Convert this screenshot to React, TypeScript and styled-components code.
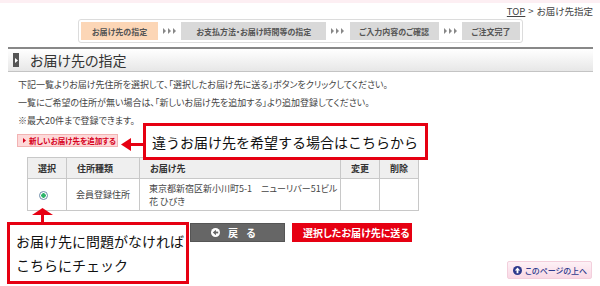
import React from "react";
import styled, { createGlobalStyle } from "styled-components";

const GlobalStyle = createGlobalStyle`
  html, body { margin: 0; padding: 0; background: #fff; }
  body { font-family: "Noto Sans CJK JP", "Noto Sans", sans-serif; color: #333; }
  svg { flex: none; }
`;

const jp = `"Noto Sans CJK JP", "Noto Sans", sans-serif`;

const Page = styled.div`
  position: relative;
  width: 600px;
  height: 286px;
  overflow: hidden;
  box-sizing: border-box;
  border-top: 3px solid #fdeff3;
  padding: 0 7px 0 8px;
  background: #fff;
  font-family: ${jp};
`;

const TopRow = styled.div`
  height: 16px;
  line-height: 18px;
  display: flex;
  justify-content: flex-end;
  align-items: center;
  gap: 3px;
  font-size: 9.5px;
  color: #444;
  font-feature-settings: "palt";
`;

const TopLink = styled.a`
  color: #444;
  text-decoration: underline;
`;

const StepBar = styled.div`
  margin: 0 0 0 70px;
  width: 445px;
  box-sizing: border-box;
  display: flex;
  align-items: center;
  padding: 2px;
  border: 1px solid #dcdcdc;
  border-radius: 3px;
  background: #fff;
`;

const Step = styled.div<{ $w: number; $active?: boolean }>`
  width: ${(p) => p.$w}px;
  height: 18px;
  flex: none;
  display: flex;
  align-items: center;
  justify-content: center;
  background: ${(p) => (p.$active ? "#fcd6b6" : "#d9d9d9")};
  color: #555;
  font-size: 8px;
  font-weight: 700;
  font-feature-settings: "palt";
`;

const StepArrow = styled.div`
  flex: 1;
  display: flex;
  justify-content: center;
  align-items: center;
`;

const SectionHeader = styled.div`
  margin-top: 4px;
  height: 22px;
  display: flex;
  align-items: center;
  border-top: 2px solid #888;
  border-bottom: 1px solid #c4c4c4;
  background: linear-gradient(#ffffff, #e7e7e7);
`;

const HeaderIcon = styled.span`
  margin-left: 5px;
  width: 6px;
  height: 14px;
  background: #555;
  display: flex;
  align-items: center;
  justify-content: center;
  flex: none;
`;

const Title = styled.h1`
  margin: 0 0 0 11px;
  font-size: 14px;
  font-weight: 400;
  color: #333;
  font-feature-settings: "palt";
`;

const Intro = styled.div`
  margin-top: 4px;
  padding-left: 10px;
  font-size: 9px;
  line-height: 18px;
  color: #444;
  font-feature-settings: "palt";
`;

const Line = styled.p`
  margin: 0;
  white-space: nowrap;
`;

const AddButton = styled.button`
  margin: 4px 0 0 9px;
  height: 13px;
  width: 101px;
  padding: 0 0 0 5px;
  display: flex;
  align-items: center;
  gap: 3px;
  border: 1px solid #f2b3b3;
  background: #fdd9d9;
  color: #d6001c;
  font-family: ${jp};
  font-size: 7.5px;
  font-weight: 700;
  font-feature-settings: "palt";
  cursor: pointer;
  white-space: nowrap;
`;

const Table = styled.table`
  margin: 10px 0 0 19px;
  border-collapse: collapse;
  width: 391px;
  table-layout: fixed;
  font-size: 9px;
  color: #444;
  font-feature-settings: "palt";
`;

const Th = styled.th<{ $w: number; $left?: boolean }>`
  width: ${(p) => p.$w}px;
  height: 21px;
  padding: 0 0 0 ${(p) => (p.$left ? 10 : 0)}px;
  text-align: ${(p) => (p.$left ? "left" : "center")};
  background: #efefef;
  border: 1px solid #c8c8c8;
  font-weight: 600;
  color: #333;
  box-sizing: border-box;
`;

const Td = styled.td<{ $align?: string; $pr?: number }>`
  height: 32px;
  padding: 0 ${(p) => p.$pr ?? 0}px 0 ${(p) => (p.$align === "left" ? 9 : 0)}px;
  text-align: ${(p) => p.$align ?? "center"};
  border: 1px solid #c8c8c8;
  line-height: 13px;
  white-space: nowrap;
  box-sizing: border-box;
`;

const Radio = styled.span`
  display: inline-block;
  width: 9px;
  height: 9px;
  border-radius: 50%;
  border: 1px solid #6b8aa8;
  background: radial-gradient(circle, #2fb46a 0 2px, #fff 2.5px);
  vertical-align: middle;
  box-sizing: border-box;
`;

const ButtonRow = styled.div`
  margin: 12px 0 0 182px;
  display: flex;
  gap: 7px;
`;

const BackButton = styled.button`
  width: 95px;
  height: 19px;
  display: flex;
  align-items: center;
  justify-content: center;
  gap: 8px;
  padding: 0;
  border: 1px solid #555;
  background: #666;
  color: #fff;
  font-family: ${jp};
  font-size: 10px;
  font-weight: 700;
  letter-spacing: 8px;
  cursor: pointer;
`;

const SendButton = styled.button`
  width: 120px;
  height: 19px;
  display: flex;
  align-items: center;
  padding: 0 0 0 11px;
  border: none;
  background: #e60012;
  color: #fff;
  font-family: ${jp};
  font-size: 10px;
  font-weight: 700;
  font-feature-settings: "palt";
  cursor: pointer;
  white-space: nowrap;
`;

const PageTopRow = styled.div`
  margin-top: 19px;
  display: flex;
  justify-content: flex-end;
  padding-right: 1px;
`;

const PageTopButton = styled.a`
  width: 85px;
  height: 18px;
  box-sizing: border-box;
  display: flex;
  align-items: center;
  gap: 3px;
  padding-left: 5px;
  border: 1px solid #f3cfdc;
  border-radius: 2px;
  background: linear-gradient(#fdf1f6, #f9d8e5);
  color: #2d3a8c;
  font-size: 8px;
  font-weight: 500;
  font-feature-settings: "palt";
  white-space: nowrap;
`;

const Callout = styled.div<{ $x: number; $y: number; $w: number; $h: number }>`
  position: absolute;
  left: ${(p) => p.$x}px;
  top: ${(p) => p.$y}px;
  width: ${(p) => p.$w}px;
  height: ${(p) => p.$h}px;
  box-sizing: border-box;
  border: 3px solid #e60012;
  background: #fff;
  display: flex;
  flex-direction: column;
  justify-content: center;
  padding-left: 6px;
  font-size: 14px;
  line-height: 24px;
  color: #111;
  white-space: nowrap;
`;

const Pointer = styled.svg<{ $x: number; $y: number }>`
  position: absolute;
  left: ${(p) => p.$x}px;
  top: ${(p) => p.$y}px;
`;

const Triangles = () => (
  <svg width="13" height="6" viewBox="0 0 13 6">
    {[0, 5, 10].map((x) => (
      <polygon key={x} points={`${x},0 ${x + 3},3 ${x},6`} fill="#888" />
    ))}
  </svg>
);

export default function App() {
  return (
    <>
      <GlobalStyle />
      <Page>
        <TopRow>
          <TopLink>TOP</TopLink>
          <span>&gt;</span>
          <span>お届け先指定</span>
        </TopRow>
        <StepBar>
          <Step $w={77} $active>お届け先の指定</Step>
          <StepArrow><Triangles /></StepArrow>
          <Step $w={145}>お支払方法・お届け時間等の指定</Step>
          <StepArrow><Triangles /></StepArrow>
          <Step $w={89}>ご入力内容のご確認</Step>
          <StepArrow><Triangles /></StepArrow>
          <Step $w={58}>ご注文完了</Step>
        </StepBar>
        <SectionHeader>
          <HeaderIcon>
            <svg width="3" height="5" viewBox="0 0 3 5">
              <polygon points="0,0 3,2.5 0,5" fill="#fff" />
            </svg>
          </HeaderIcon>
          <Title>お届け先の指定</Title>
        </SectionHeader>
        <Intro>
          <Line>下記一覧よりお届け先住所を選択して、「選択したお届け先に送る」ボタンをクリックしてください。</Line>
          <Line>一覧にご希望の住所が無い場合は、「新しいお届け先を追加する」より追加登録してください。</Line>
          <Line>※最大20件まで登録できます。</Line>
        </Intro>
        <AddButton>
          <svg width="3" height="5" viewBox="0 0 3 5">
            <polygon points="0,0 3,2.5 0,5" fill="#d6001c" />
          </svg>
          新しいお届け先を追加する
        </AddButton>
        <Table>
          <thead>
            <tr>
              <Th $w={39}>選択</Th>
              <Th $w={73} $left>住所種類</Th>
              <Th $w={201} $left>お届け先</Th>
              <Th $w={39}>変更</Th>
              <Th $w={39}>削除</Th>
            </tr>
          </thead>
          <tbody>
            <tr>
              <Td $pr={7}><Radio /></Td>
              <Td>会員登録住所</Td>
              <Td $align="left">
                東京都新宿区新小川町5-1　ニューリバー51ビル
                <br />
                花 ひびき
              </Td>
              <Td />
              <Td />
            </tr>
          </tbody>
        </Table>
        <ButtonRow>
          <BackButton>
            <svg width="9" height="9" viewBox="0 0 10 10">
              <circle cx="5" cy="5" r="5" fill="#fff" />
              <polygon points="2,5 5.5,2 5.5,8" fill="#666" />
              <rect x="5" y="4" width="3" height="2" fill="#666" />
            </svg>
            <span>戻る</span>
          </BackButton>
          <SendButton>選択したお届け先に送る</SendButton>
        </ButtonRow>
        <PageTopRow>
          <PageTopButton>
            <svg width="9" height="9" viewBox="0 0 10 10">
              <circle cx="5" cy="5" r="5" fill="#2d3a8c" />
              <polygon points="5,1.8 8,5 6,5 6,8 4,8 4,5 2,5" fill="#fff" />
            </svg>
            このページの上へ
          </PageTopButton>
        </PageTopRow>

        <Pointer $x={119} $y={133} width="26" height="17" viewBox="0 0 26 17">
          <line x1="26" y1="8.5" x2="8" y2="8.5" stroke="#e60012" strokeWidth="3" />
          <polygon points="2,8.5 12,2 12,15" fill="#e60012" />
        </Pointer>
        <Callout $x={143} $y={120} $w={285} $h={37}>
          違うお届け先を希望する場合はこちらから
        </Callout>

        <Pointer $x={31} $y={204} width="23" height="17" viewBox="0 0 23 17">
          <line x1="11.5" y1="17" x2="11.5" y2="6" stroke="#e60012" strokeWidth="3" />
          <polygon points="11.5,1 22,8 1,8" fill="#e60012" />
        </Pointer>
        <Callout $x={7} $y={219} $w={182} $h={62}>
          <span>お届け先に問題がなければ</span>
          <span>こちらにチェック</span>
        </Callout>
      </Page>
    </>
  );
}
